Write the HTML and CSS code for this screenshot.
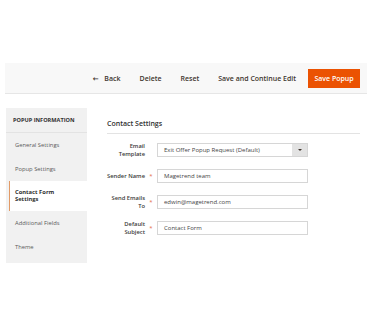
FILE: index.html
```html
<!DOCTYPE html>
<html>
<head>
<meta charset="utf-8">
<link rel="stylesheet" href="styles.css">
</head>
<body>
<div class="toolbar">
  <span class="tbtn"><span class="arrow">&#8592;</span> Back</span>
  <span class="tbtn">Delete</span>
  <span class="tbtn">Reset</span>
  <span class="tbtn">Save and Continue Edit</span>
  <span class="primary">Save Popup</span>
</div>
<div class="main">
  <div class="sidebar">
    <div class="side-title">POPUP INFORMATION</div>
    <div class="side-item">General Settings</div>
    <div class="side-item">Popup Settings</div>
    <div class="side-item active">Contact Form<br>Settings</div>
    <div class="side-item">Additional Fields</div>
    <div class="side-item">Theme</div>
  </div>
  <div class="content">
    <div class="heading">Contact Settings</div>
    <div class="row">
      <div class="label">Email<br>Template</div>
      <div class="req"></div>
      <div class="select"><span>Exit Offer Popup Request (Default)</span><span class="caret"></span></div>
    </div>
    <div class="row">
      <div class="label">Sender Name</div>
      <div class="req">*</div>
      <div class="input">Magetrend team</div>
    </div>
    <div class="row">
      <div class="label">Send Emails<br>To</div>
      <div class="req">*</div>
      <div class="input">edwin@magetrend.com</div>
    </div>
    <div class="row">
      <div class="label">Default<br>Subject</div>
      <div class="req">*</div>
      <div class="input">Contact Form</div>
    </div>
  </div>
</div>
</body>
</html>
```
FILE: styles.css
```css
body {
  margin: 0;
  background: #fff;
  font-family: "Open Sans", "DejaVu Sans", sans-serif;
  color: #303030;
}
.toolbar {
  margin: 63px 7px 0 5px;
  height: 30px;
  background: #f8f8f8;
  border-bottom: 1px solid #e6e6e6;
  display: flex;
  align-items: center;
  justify-content: flex-end;
  padding-right: 7px;
  font-size: 7px;
  font-weight: 600;
  color: #41362f;
}
.tbtn {
  margin-right: 19px;
}
.tbtn:nth-child(4) { margin-right: 12px; }
.arrow { margin-right: 4px; }
.primary {
  background: #eb5202;
  color: #fff;
  height: 19px;
  width: 52px;
  display: flex;
  align-items: center;
  justify-content: center;
}
.main {
  display: flex;
  margin-top: 14px;
  padding-left: 6px;
}
.sidebar {
  width: 81px;
  background: #f1f1f1;
  padding-bottom: 4px;
  align-self: flex-start;
}
.side-title {
  height: 24px;
  display: flex;
  align-items: center;
  padding-left: 7px;
  font-size: 5.6px;
  font-weight: 700;
  border-bottom: 1px solid #e3e3e3;
}
.side-item {
  height: 24px;
  display: flex;
  align-items: center;
  padding-left: 9px;
  font-size: 5.8px;
  color: #5a5a5a;
}
.side-item.active {
  height: 30px;
  background: #fff;
  margin-left: 3px;
  padding-left: 5px;
  border-left: 1px solid #e29a66;
  font-weight: 700;
  color: #303030;
  line-height: 1.15;
}
.content {
  margin-left: 20px;
  width: 253px;
}
.heading {
  font-size: 7px;
  font-weight: 600;
  padding: 12px 0 0 0;
  height: 26px;
  border-bottom: 1px solid #e3e3e3;
  box-sizing: border-box;
  line-height: 8px;
}
.row {
  display: flex;
  align-items: center;
  margin-top: 9px;
  height: 14px;
}
.row + .row { margin-top: 12px; }
.label {
  width: 38px;
  text-align: right;
  font-size: 5.8px;
  font-weight: 600;
  line-height: 8px;
  white-space: nowrap;
  color: #3a3a3a;
}
.req {
  width: 12px;
  text-align: center;
  color: #e36b4a;
  font-size: 6px;
}
.select, .input {
  width: 151px;
  height: 14px;
  box-sizing: border-box;
  border: 1px solid #d6d6d6;
  font-size: 6px;
  display: flex;
  align-items: center;
  padding-left: 6px;
  color: #444;
}
.select {
  justify-content: space-between;
  padding-right: 0;
}
.caret {
  width: 15px;
  height: 12px;
  background: #e3e3e3;
  position: relative;
}
.caret::after {
  content: "";
  position: absolute;
  left: 6px;
  top: 5px;
  border-left: 2px solid transparent;
  border-right: 2px solid transparent;
  border-top: 2px solid #41362f;
}
```
